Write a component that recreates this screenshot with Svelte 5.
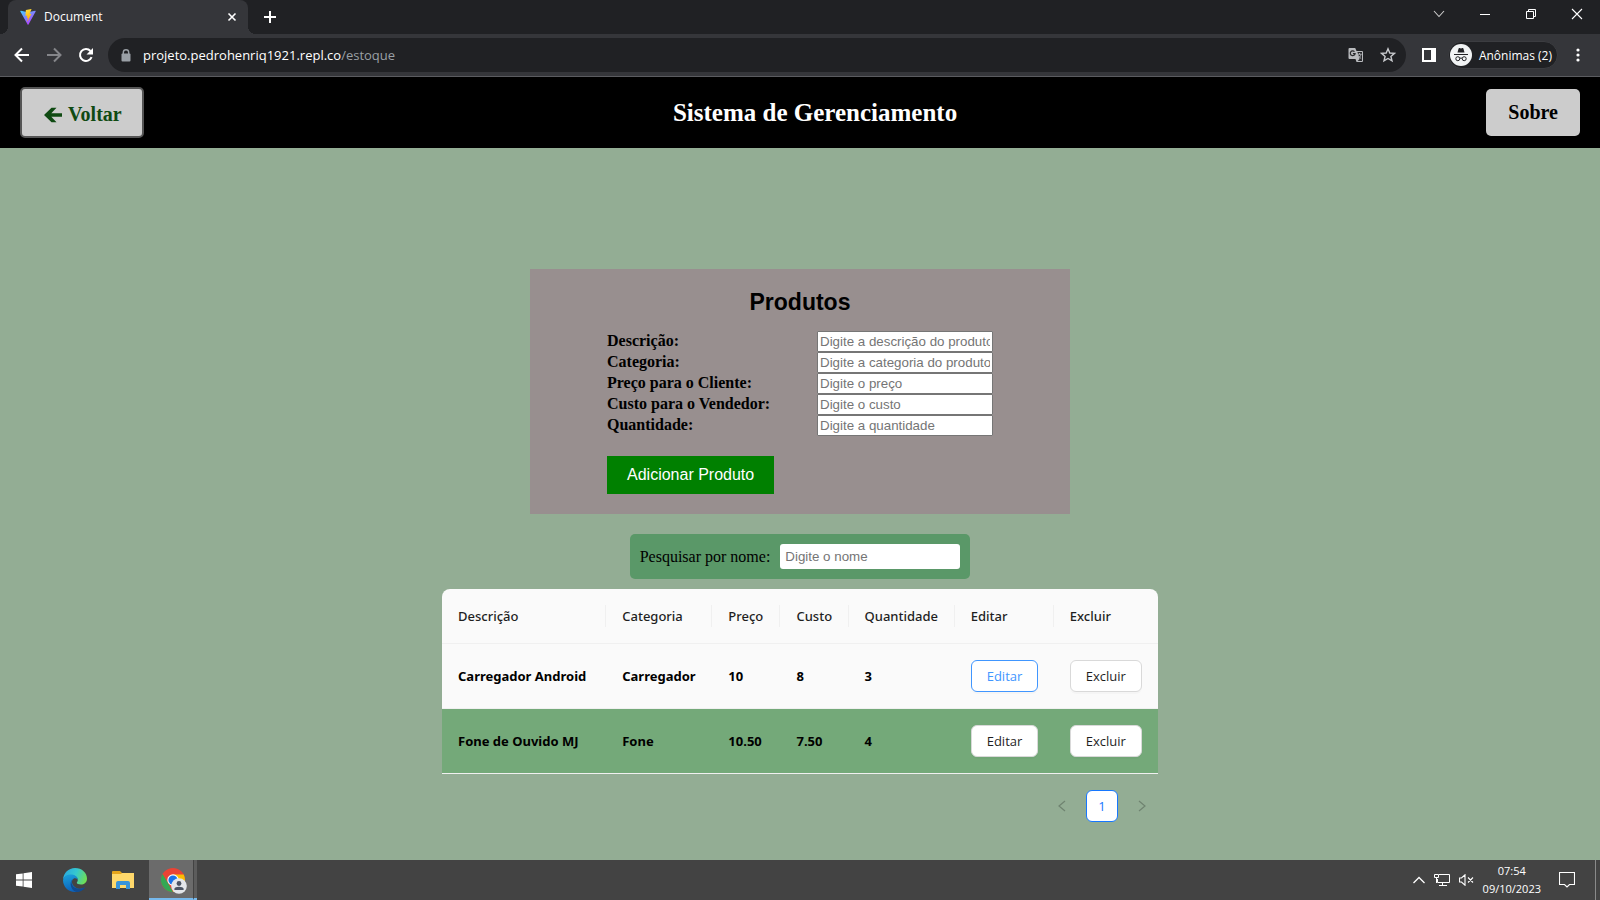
<script>
  const fields = [
    { id: 'descricao', label: 'Descrição:', hint: 'Digite a descrição do produto' },
    { id: 'categoria', label: 'Categoria:', hint: 'Digite a categoria do produto' },
    { id: 'preco', label: 'Preço para o Cliente:', hint: 'Digite o preço' },
    { id: 'custo', label: 'Custo para o Vendedor:', hint: 'Digite o custo' },
    { id: 'quantidade', label: 'Quantidade:', hint: 'Digite a quantidade' }
  ];
  const columns = ['Descrição', 'Categoria', 'Preço', 'Custo', 'Quantidade', 'Editar', 'Excluir'];
  const rows = [
    { cells: ['Carregador Android', 'Carregador', '10', '8', '3'], focused: true },
    { cells: ['Fone de Ouvido MJ', 'Fone', '10.50', '7.50', '4'], focused: false }
  ];
</script>

<div class="screen">
  <div class="tabstrip">
    <div class="tab">
      <svg width="16" height="16" viewBox="0 0 32 32">
        <defs>
          <linearGradient id="vite-a" x1="0" y1="0" x2="0.7" y2="1"><stop offset="0" stop-color="#41d1ff" /><stop offset="1" stop-color="#bd34fe" /></linearGradient>
          <linearGradient id="vite-b" x1="0" y1="0" x2="0.2" y2="1"><stop offset="0" stop-color="#ffea83" /><stop offset="0.1" stop-color="#ffdd35" /><stop offset="1" stop-color="#ffa800" /></linearGradient>
        </defs>
        <path fill="url(#vite-a)" d="M31.300 5.200 17 30.900a1 1 0 0 1-1.800 0L.7 5.200a1 1 0 0 1 1-1.500L16 6.300l14.300-2.600a1 1 0 0 1 1 1.500z" />
        <path fill="url(#vite-b)" d="M22.500.1 12 2.100a.5.5 0 0 0-.4.4L11 13.400a.5.5 0 0 0 .5.4l3-.6-.9 4.300a.5.5 0 0 0 .6.5l1.800-.5-1.400 6.700c-.1.4.5.6.7.3L22.600 10a.5.5 0 0 0-.5-.6l-3 .5L23 .6z" />
      </svg>
      <span class="tabtitle">Document</span>
      <button class="bare" aria-label="Fechar guia"><svg width="10" height="10" viewBox="0 0 10 10"><path d="M1.500 1.500l7 7M8.500 1.500l-7 7" stroke="#fff" stroke-width="1.600" /></svg></button>
    </div>
    <button class="bare newtab" aria-label="Nova guia"><svg width="14" height="14" viewBox="0 0 14 14"><path d="M7 1v12M1 7h12" stroke="#fff" stroke-width="2" /></svg></button>
    <div class="window">
      <button class="bare" aria-label="Pesquisar guias"><svg width="12" height="12" viewBox="0 0 12 12"><path d="M1 3l5 5.500L11 3" fill="none" stroke="#ccc" stroke-width="1.100" /></svg></button>
      <button class="bare" aria-label="Minimizar"><svg width="12" height="12" viewBox="0 0 12 12"><path d="M1 6.500h10" stroke="#fff" /></svg></button>
      <button class="bare" aria-label="Restaurar"><svg width="12" height="12" viewBox="0 0 12 12"><path d="M1.500 3.500h7v7h-7zM3.500 3.500v-2h7v7h-2" fill="none" stroke="#fff" /></svg></button>
      <button class="bare" aria-label="Fechar"><svg width="12" height="12" viewBox="0 0 12 12"><path d="M1 1l10 10M11 1L1 11" stroke="#fff" stroke-width="1.100" /></svg></button>
    </div>
  </div>

  <div class="toolbar">
    <button class="bare" aria-label="Voltar página"><svg width="16" height="16" viewBox="0 0 16 16"><path d="M15 8H2M8 1.500L1.500 8 8 14.500" fill="none" stroke="#fff" stroke-width="2" /></svg></button>
    <button class="bare" aria-label="Avançar página"><svg width="16" height="16" viewBox="0 0 16 16"><path d="M1 8h13M8 1.500L14.500 8 8 14.500" fill="none" stroke="#85868a" stroke-width="2" /></svg></button>
    <button class="bare" aria-label="Recarregar"><svg width="16" height="16" viewBox="0 0 16 16"><path d="M13.600 10.200A6 6 0 1 1 12.500 4" fill="none" stroke="#fff" stroke-width="2" /><path d="M15 1v6.500H8.500z" fill="#fff" /></svg></button>
    <div class="address">
      <svg width="10" height="13" viewBox="0 0 10 13"><path d="M2.300 5V3.500a2.700 2.700 0 0 1 5.400 0V5" fill="none" stroke="#9aa0a6" stroke-width="1.400" /><rect x="0.500" y="4.500" width="9" height="8" rx="1" fill="#9aa0a6" /></svg>
      <span class="url">projeto.pedrohenriq1921.repl.co<span class="path">/estoque</span></span>
      <button class="bare" aria-label="Traduzir"><svg width="16" height="16" viewBox="0 0 16 16">
        <path d="M1.500 1h5.700l1.300 3h5.500q1 0 1 1v9q0 1-1 1H8.500l-1-3h-6q-1 0-1-1V2q0-1 1-1z" fill="#b8babd" />
        <path d="M9 5h5v9H9.600l2-2L9.400 5z" fill="#292a2d" /><path d="M6.500 4.700A2.400 2.400 0 1 0 7.100 6.600H4.900" fill="none" stroke="#292a2d" stroke-width="1.200" /><path d="M9.500 7.200h4M11.500 6v1.200M13 7.200c-.4 2-1.500 3.300-2.700 4M10.500 8.600c.6 1.200 1.500 2.200 2.700 3" fill="none" stroke="#b8babd" stroke-width=".9" />
      </svg></button>
      <button class="bare" aria-label="Favoritar"><svg width="16" height="16" viewBox="0 0 16 16"><path d="M8 1.800l1.800 4.200 4.600.4-3.500 3 1.100 4.500L8 11.500l-4 2.400 1.100-4.500-3.500-3 4.600-.4z" fill="none" stroke="#c8cacd" stroke-width="1.400" /></svg></button>
    </div>
    <button class="bare" aria-label="Painel lateral"><svg width="14" height="14" viewBox="0 0 14 14"><path fill="#fff" fill-rule="evenodd" d="M0 0h14v14H0zM2 2v10h7V2z" /></svg></button>
    <button class="profile">
      <svg width="22" height="22" viewBox="0 0 22 22"><circle cx="11" cy="11" r="11" fill="#f1f3f4" /><path d="M7.500 8.500L8.600 4.600q.3-.8 1-.5l1.400.4 1.400-.4q.8-.3 1 .5l1.100 3.900z" fill="#202124" /><path d="M4 10.500h14" stroke="#202124" /><g fill="none" stroke="#202124"><circle cx="7.800" cy="14.700" r="2" /><circle cx="14.200" cy="14.700" r="2" /><path d="M9.800 14.300q1.200-.6 2.400 0" /></g></svg>
      <span>Anônimas (2)</span>
    </button>
    <button class="bare menu" aria-label="Menu"><svg width="4" height="14" viewBox="0 0 4 14"><g fill="#fff"><circle cx="2" cy="2" r="1.600" /><circle cx="2" cy="7" r="1.600" /><circle cx="2" cy="12" r="1.600" /></g></svg></button>
  </div>

  <header>
    <button class="nav back">
      <svg width="18" height="16" viewBox="0 0 18 16"><path d="M0 8L7.500 .8h5L7.300 6.200H18v3.600H7.300l5.200 5.400h-5z" fill="#0f4a12" /></svg>
      <span>Voltar</span>
    </button>
    <h1>Sistema de Gerenciamento</h1>
    <button class="nav">Sobre</button>
  </header>

  <main>
    <form class="card">
      <h2>Produtos</h2>
      {#each fields as f}
        <div class="field">
          <label for={f.id}>{f.label}</label>
          <input id={f.id} type="text" placeholder={f.hint} />
        </div>
      {/each}
      <button type="button" class="add">Adicionar Produto</button>
    </form>

    <div class="search">
      <label for="busca">Pesquisar por nome:</label>
      <input id="busca" type="text" placeholder="Digite o nome" />
    </div>

    <div class="listing">
      <table>
        <colgroup>
          <col class="c1" /><col class="c2" /><col class="c3" /><col class="c3" /><col class="c2" /><col class="c4" /><col class="c5" />
        </colgroup>
        <thead>
          <tr>{#each columns as c}<th scope="col"><span>{c}</span></th>{/each}</tr>
        </thead>
        <tbody>
          {#each rows as r}
            <tr>
              {#each r.cells as c}<td>{c}</td>{/each}
              <td><button class="action" class:focused={r.focused}>Editar</button></td>
              <td><button class="action">Excluir</button></td>
            </tr>
          {/each}
        </tbody>
      </table>
      <nav class="pages" aria-label="Paginação">
        <button class="bare" aria-label="Página anterior" disabled><svg width="8" height="12" viewBox="0 0 8 12"><path d="M7 1L1 6l6 5" fill="none" stroke="#6f8370" stroke-width="1.200" /></svg></button>
        <button class="current">1</button>
        <button class="bare" aria-label="Próxima página" disabled><svg width="8" height="12" viewBox="0 0 8 12"><path d="M1 1l6 5-6 5" fill="none" stroke="#6f8370" stroke-width="1.200" /></svg></button>
      </nav>
    </div>
  </main>

  <footer>
    <button class="bare task" aria-label="Iniciar"><svg width="16" height="16" viewBox="0 0 16 16"><path fill="#fff" d="M0 2.300l6.700-.9v6.100H0zM7.500 1.200L16 0v7.500H7.500zM0 8.400h6.700v6.200L0 13.700zM7.500 8.400H16V16l-8.500-1.200z" /></svg></button>
    <button class="bare task app" aria-label="Edge">
      <svg width="24" height="24" viewBox="0 0 24 24">
        <defs>
          <linearGradient id="edge-a" x1="0" y1="0.3" x2="1" y2="0.6"><stop offset="0" stop-color="#2aa9e0" /><stop offset="0.5" stop-color="#35c8cf" /><stop offset="1" stop-color="#70e052" /></linearGradient>
          <linearGradient id="edge-b" x1="0" y1="0" x2="0.3" y2="1"><stop offset="0" stop-color="#1ba3dd" /><stop offset="1" stop-color="#0c62bb" /></linearGradient>
        </defs>
        <path fill="url(#edge-a)" d="M0 11.500C.5 5 5.500 0 12 0c7 0 12 5 12 10.500 0 4-3 6-6 6-2.500 0-4.200-.8-4.200-1.700 0-.7 1-1.100 1-2.800 0-2.500-2.800-5-7-5C4.500 7 1.500 8.500 0 11.500z" />
        <path fill="url(#edge-b)" d="M0 12c1-3.700 4-5.500 7.500-5.500 4 0 7.300 2 7.300 5.200-1.500-1.500-3-1.800-4.300-1-3.500 2.300-1 9 5.500 10 1.500.2 3.300-.2 4.800-1C18.500 22.500 15.500 24 12 24 5 24 0 18.500 0 12z" />
        <path fill="#104b91" d="M9.800 11.200c-3 2.600-.5 8.800 5.700 9.600 2 .3 4-.3 5.700-1.300.6-.3 1-.1.6.5-2 2.700-5 4-8.300 4C8 23 5.500 14 9.800 11.200z" />
      </svg>
    </button>
    <button class="bare task" aria-label="Explorador de arquivos">
      <svg width="22" height="18" viewBox="0 0 22 18"><path d="M0 1q0-1 1-1h7l2 2h11q1 0 1 1v14H0z" fill="#e6a51c" /><path d="M0 3h9l1-1h12v15H0z" fill="#ffd86b" /><path d="M4 18v-6q0-2 2-2h10q2 0 2 2v6h-4v-4H8v4z" fill="#3894da" /></svg>
    </button>
    <button class="bare task active" aria-label="Chrome">
      <svg width="26" height="26" viewBox="0 0 26 26">
        <circle cx="12" cy="12" r="12" fill="#ea4335" />
        <path d="M1.600 6L7 15l5 9A12 12 0 0 1 1.600 6z" fill="#34a853" />
        <path d="M12 6.500h10.700A12 12 0 0 1 12 24l5-9z" fill="#fbbc04" />
        <circle cx="12" cy="12" r="5.700" fill="#fff" /><circle cx="12" cy="12" r="4.600" fill="#1a73e8" />
        <circle cx="18" cy="18" r="7.800" fill="#e3e6ea" /><circle cx="18" cy="15.500" r="2.400" fill="#4c5564" /><path d="M13.400 22v-1.200c0-2.700 9.200-2.700 9.200 0V22z" fill="#4c5564" />
      </svg>
    </button>
    <span class="stack"></span>
    <div class="tray">
      <svg width="12" height="8" viewBox="0 0 12 8"><path d="M.5 7L6 1.500 11.500 7" fill="none" stroke="#fff" stroke-width="1.300" /></svg>
      <svg width="16" height="14" viewBox="0 0 16 14"><path d="M5 1.500h10.500v8H3.500V6M8.500 9.500v3M5 12.500h8M.5 1.500h4v3h-4zM2.500 5v5" fill="none" stroke="#fff" /></svg>
      <svg width="15" height="12" viewBox="0 0 15 12"><path d="M.5 4h2L6 .8v10.400L2.500 8h-2zM9 3.500l5 5M14 3.500l-5 5" fill="none" stroke="#fff" stroke-width="1.100" /></svg>
      <div class="clock"><span>07:54</span><span>09/10/2023</span></div>
      <svg class="notice" width="16" height="16" viewBox="0 0 16 16"><path d="M.5 .5h15v12h-5L8 15l-2.500-2.500h-5z" fill="none" stroke="#fff" stroke-width="1.100" /></svg>
    </div>
  </footer>
</div>

<style>
  :global(body) { margin: 0; }
  .screen {
    min-height: 100vh;
    display: flex;
    flex-direction: column;
    background: #93ad94;
    font-family: "Liberation Serif", serif;
    color: #000;
  }
  svg { display: block; flex: none; }
  button { font-family: inherit; }
  .bare { border: 0; padding: 0; background: none; }

  .tabstrip {
    height: 34px;
    display: flex;
    align-items: center;
    padding-left: 8px;
    background: #202124;
    color: #fff;
    font: 12px/16px "Open Sans", sans-serif;
  }
  .tab {
    position: relative;
    box-sizing: border-box;
    width: 240px;
    height: 34px;
    display: flex;
    align-items: center;
    gap: 8px;
    padding: 0 11px 0 12px;
    background: #35363a;
    border-radius: 8px 8px 0 0;
  }
  .tab::before, .tab::after {
    content: "";
    position: absolute;
    bottom: 0;
    width: 8px;
    height: 8px;
  }
  .tab::before { right: 100%; background: radial-gradient(circle at 0 0, #202124 8px, #35363a 8px); }
  .tab::after { left: 100%; background: radial-gradient(circle at 100% 0, #202124 8px, #35363a 8px); }
  .tabtitle { flex: 1; }
  .newtab { margin-left: 15px; }
  .window { display: flex; gap: 34px; margin: 0 17px 6px auto; }

  .toolbar {
    height: 42px;
    display: flex;
    align-items: center;
    gap: 16px;
    padding: 0 20px 0 14px;
    background: #35363a;
    border-bottom: 1px solid #5b5c60;
    font: 12px/16px "Open Sans", sans-serif;
  }
  .address {
    flex: 1;
    height: 34px;
    display: flex;
    align-items: center;
    gap: 16px;
    padding: 0 10px 0 13px;
    margin-left: -2px;
    border-radius: 17px;
    background: #202124;
  }
  .url { flex: 1; margin-left: -4px; color: #fff; font-size: 13px; }
  .path { color: #9aa0a6; }
  .profile {
    height: 28px;
    display: flex;
    align-items: center;
    gap: 7px;
    padding: 0 5px 0 1px;
    margin-left: -4px;
    border: 1px solid #3c3d41;
    border-radius: 14px;
    background: #202124;
    color: #fff;
    font-size: 12px;
  }
  .menu { margin-left: 2px; }

  header {
    height: 71px;
    display: flex;
    align-items: center;
    justify-content: space-between;
    padding: 0 20px;
    background: #000;
    color: #fff;
  }
  h1 { margin: 0; font-size: 25px; line-height: 28px; }
  .nav {
    padding: 12px 22px;
    border: 0;
    border-radius: 5px;
    background: #ccc;
    color: #000;
    font-size: 20px;
    font-weight: bold;
    line-height: 23px;
  }
  .back {
    display: flex;
    align-items: center;
    gap: 6px;
    padding: 14px 20px 10px 22px;
    border: 2px solid #555;
    color: #0f4a12;
  }

  main {
    flex: 1;
    display: flex;
    flex-direction: column;
    align-items: center;
    padding: 121px 20px 38px;
  }
  .card {
    box-sizing: border-box;
    width: 100%;
    max-width: 540px;
    padding: 20px 77px;
    background: #988f8f;
  }
  h2 {
    margin: 0 0 15px;
    text-align: center;
    font: bold 23px/27px "Liberation Sans", sans-serif;
  }
  .field { display: flex; justify-content: space-between; align-items: flex-start; height: 21px; }
  .field label { font-size: 16px; font-weight: bold; line-height: 19px; }
  .field input {
    box-sizing: border-box;
    width: 176px;
    height: 21px;
    padding: 1px 2px;
    border: 1px solid #767676;
    border-radius: 1px;
  }
  input { font-family: "Liberation Sans", sans-serif; background: #fff; }
  input::placeholder { color: #757575; }
  .add {
    margin-top: 20px;
    padding: 10px 20px;
    border: 0;
    background: #008000;
    color: #fff;
    font: 16px/18px "Liberation Sans", sans-serif;
  }
  .search {
    display: flex;
    align-items: center;
    gap: 10px;
    margin: 20px 0 10px;
    padding: 10px;
    border-radius: 5px;
    background: #5a9868;
    font-size: 16px;
  }
  .search input {
    box-sizing: border-box;
    width: 180px;
    height: 25px;
    padding: 5px;
    border: 0;
    border-radius: 3px;
  }

  .listing { width: 100%; max-width: 716px; font: 14px/22px "Open Sans", sans-serif; }
  table { width: 100%; table-layout: fixed; border-collapse: separate; border-spacing: 0; }
  .c1 { width: 164px; }
  .c2 { width: 106px; }
  .c3 { width: 68px; }
  .c4 { width: 99px; }
  .c5 { width: 104px; }
  th, td {
    padding: 16px 0 16px 16px;
    border-bottom: 1px solid #f0f0f0;
    background: #fafafa;
    font-family: "Noto Sans", sans-serif;
    font-size: 13px;
    text-align: left;
    white-space: nowrap;
  }
  th { color: #1f1f1f; font-weight: 500; }
  th span { display: block; border-right: 1px solid #f0f0f0; }
  th:last-child span { border: 0; }
  th:first-child { border-top-left-radius: 8px; }
  th:last-child { border-top-right-radius: 8px; }
  td { font-weight: bold; line-height: 32px; }
  tbody tr:last-child td { background: #74a979; }
  .action {
    display: block;
    height: 32px;
    padding: 0 15px;
    border: 1px solid #d9d9d9;
    border-radius: 6px;
    background: #fff;
    box-shadow: 0 2px 0 rgba(0, 0, 0, 0.02);
    color: #1f1f1f;
    font-family: "Open Sans", sans-serif;
    font-size: 13px;
  }
  .focused { border-color: #4096ff; color: #4096ff; }
  .pages { display: flex; align-items: center; justify-content: flex-end; gap: 20px; padding: 16px 12px 0; }
  .current {
    width: 32px;
    height: 32px;
    padding: 0;
    border: 1px solid #1677ff;
    border-radius: 6px;
    background: #fff;
    color: #1677ff;
    font-size: 13px;
    font-weight: 500;
  }

  footer { height: 40px; display: flex; align-items: center; background: #434343; }
  .task { width: 48px; height: 40px; display: flex; align-items: center; justify-content: center; }
  .app { margin-left: 3px; }
  .active {
    box-sizing: border-box;
    width: 44px;
    margin-left: 2px;
    padding: 4px 0 0 6px;
    border-bottom: 2px solid #76b9ed;
    background: #6b6b6b;
  }
  .stack { box-sizing: border-box; width: 4px; height: 40px; border-left: 1px solid #434343; border-bottom: 2px solid #76b9ed; background: #5c5c5c; }
  .tray {
    height: 40px;
    display: flex;
    align-items: center;
    gap: 9px;
    margin: 0 4px 0 auto;
    padding-right: 20px;
    border-right: 1px solid #8a8a8a;
  }
  .clock {
    display: flex;
    flex-direction: column;
    align-items: center;
    color: #fff;
    font: 11px/18px "Open Sans", sans-serif;
  }
  .notice { margin-left: 9px; }
</style>
